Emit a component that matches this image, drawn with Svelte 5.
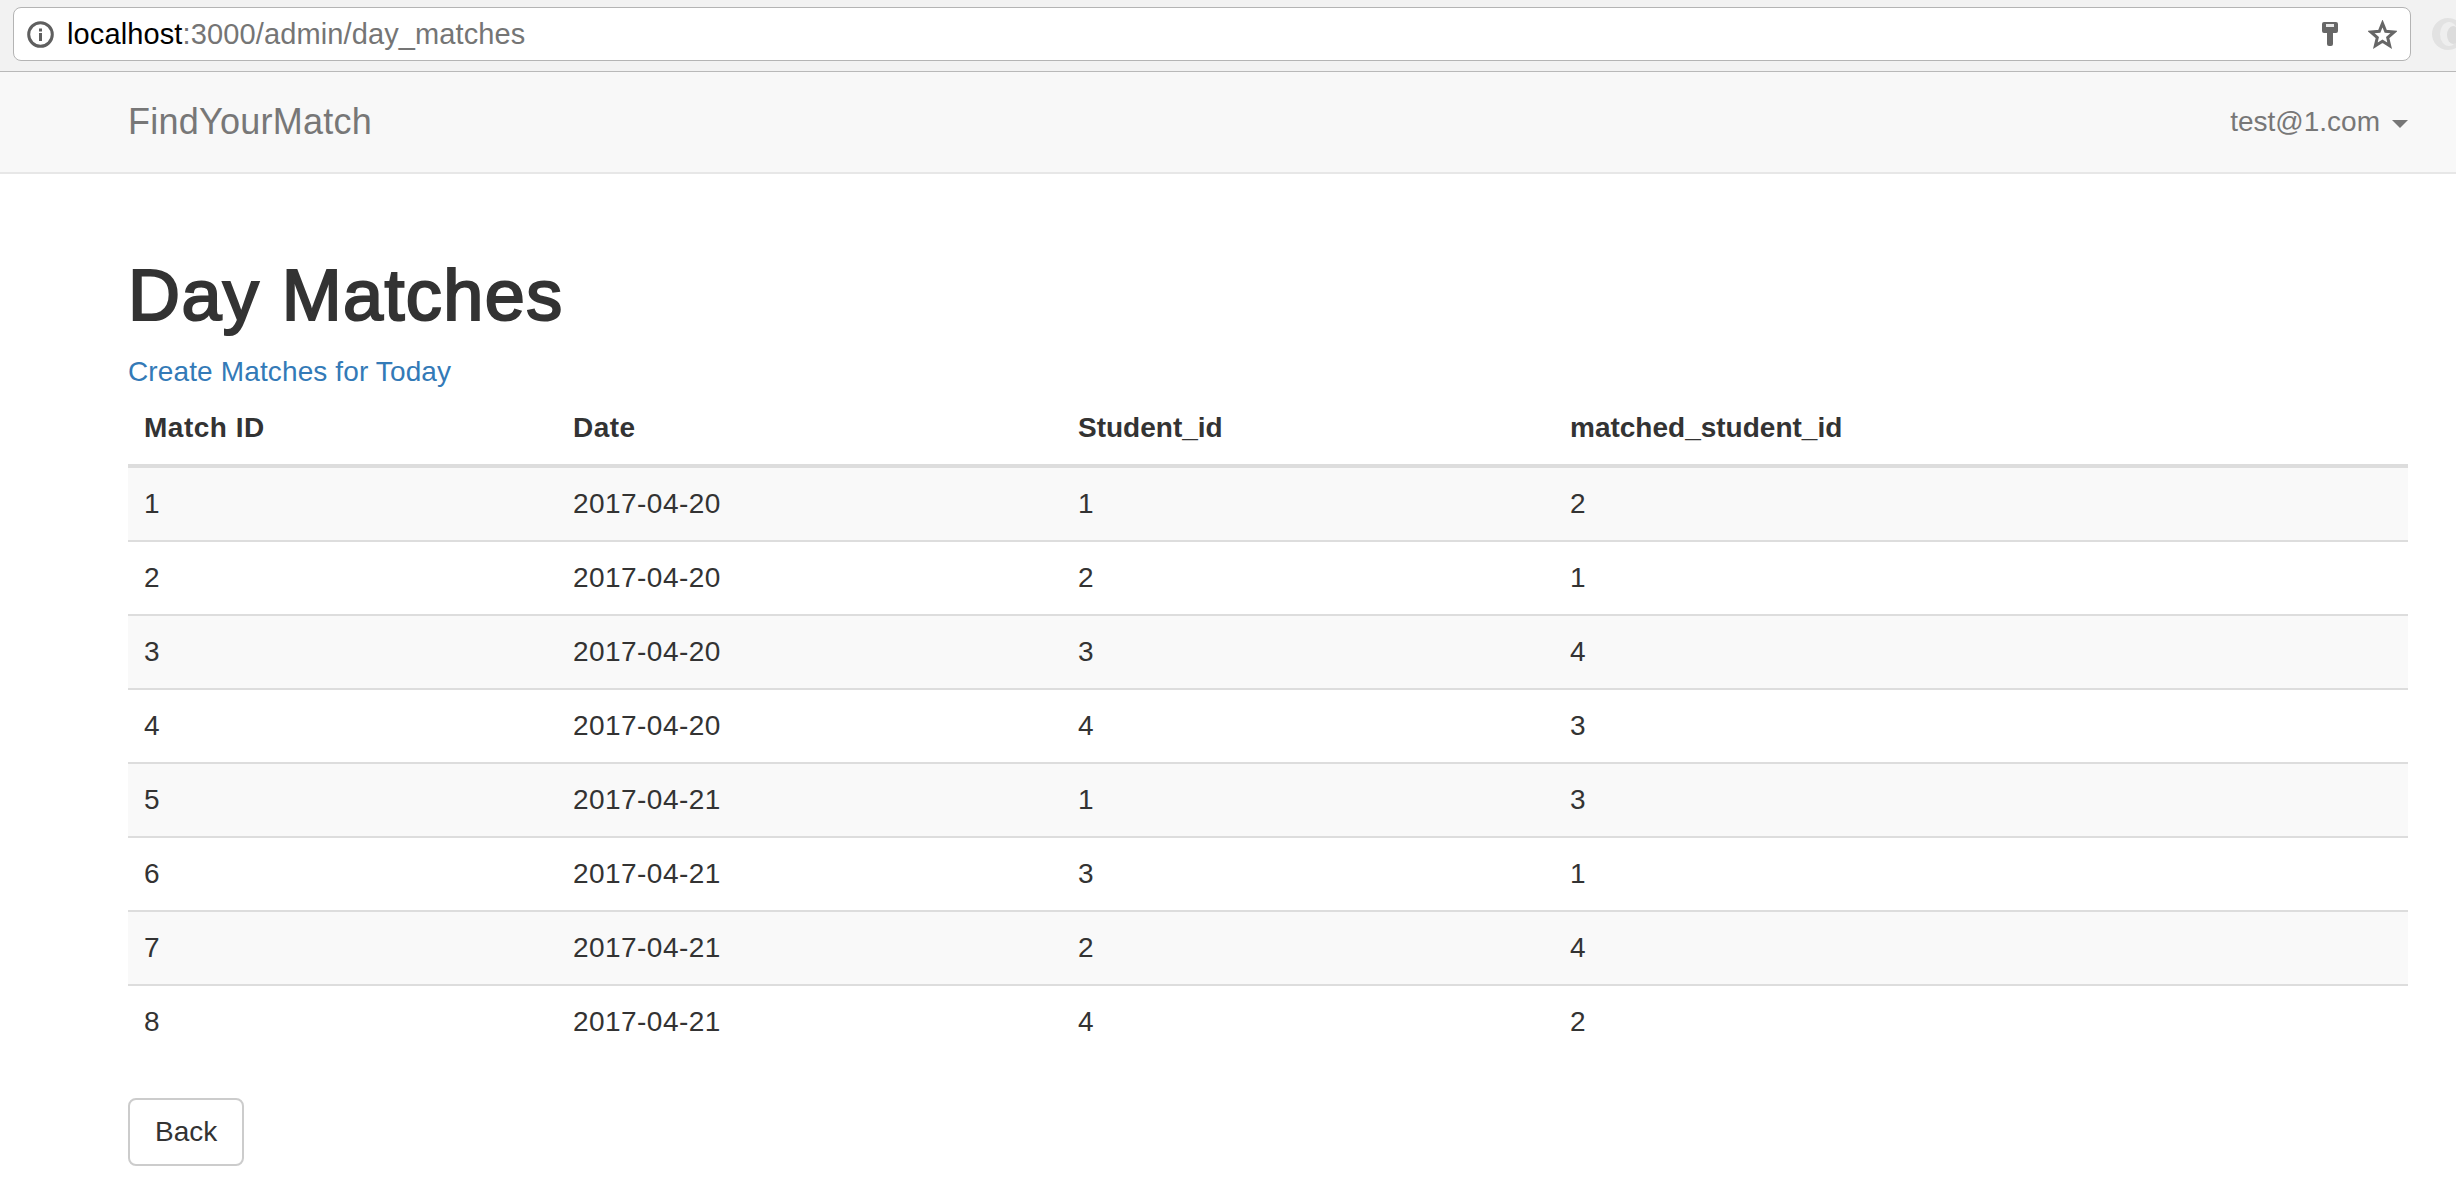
<script lang="ts">
	const matches = [
		{ id: 1, date: "2017-04-20", student: 1, matched: 2 },
		{ id: 2, date: "2017-04-20", student: 2, matched: 1 },
		{ id: 3, date: "2017-04-20", student: 3, matched: 4 },
		{ id: 4, date: "2017-04-20", student: 4, matched: 3 },
		{ id: 5, date: "2017-04-21", student: 1, matched: 3 },
		{ id: 6, date: "2017-04-21", student: 3, matched: 1 },
		{ id: 7, date: "2017-04-21", student: 2, matched: 4 },
		{ id: 8, date: "2017-04-21", student: 4, matched: 2 }
	];
</script>

<div class="chrome">
	<div class="omnibox">
		<svg class="info" viewBox="0 0 27 27" width="27" height="27" aria-hidden="true">
			<circle cx="13.5" cy="13.5" r="11.8" fill="none" stroke="#5f5f5f" stroke-width="3" />
			<rect x="12" y="12" width="3" height="8" fill="#5f5f5f" />
			<rect x="12" y="7.5" width="3" height="3" fill="#5f5f5f" />
		</svg>
		<span class="url"><span class="host">localhost</span>:3000/admin/day_matches</span>
		<svg class="key" viewBox="0 0 16 24" width="16" height="24" aria-hidden="true">
			<path d="M2 0h12a2 2 0 0 1 2 2v7a2 2 0 0 1-2 2h-3v11a2 2 0 0 1-2 2H7a2 2 0 0 1-2-2V11H2a2 2 0 0 1-2-2V2a2 2 0 0 1 2-2z" fill="#666" />
			<rect x="4" y="2" width="8" height="3" fill="#e8e8e8" />
		</svg>
		<svg class="star" viewBox="0 0 29 29" width="29" height="29" aria-hidden="true">
			<path d="M14.5 3.4l3.2 7.9 8.5.7-6.5 5.5 2 8.3-7.2-4.5-7.2 4.5 2-8.3L2.8 12l8.5-.7z" fill="none" stroke="#666" stroke-width="3" stroke-linejoin="miter" />
		</svg>
	</div>
	<svg class="ext" viewBox="0 0 24 32" width="24" height="32" aria-hidden="true">
		<circle cx="16" cy="16" r="16" fill="#e2e2e2" />
		<ellipse cx="17" cy="16" rx="9" ry="12" fill="#eeeeee" />
		<ellipse cx="21" cy="17" rx="6" ry="9" fill="#dcdcdc" />
	</svg>
</div>

<nav class="navbar">
	<a class="brand" href="#top">FindYourMatch</a>
	<a class="user" href="#top">test@1.com<span class="caret"></span></a>
</nav>

<main class="container">
	<h1>Day Matches</h1>
	<a class="create" href="#top">Create Matches for Today</a>

	<table>
		<colgroup>
			<col class="c1" />
			<col class="c2" />
			<col class="c3" />
			<col />
		</colgroup>
		<thead>
			<tr>
				<th>Match ID</th>
				<th>Date</th>
				<th>Student_id</th>
				<th>matched_student_id</th>
			</tr>
		</thead>
		<tbody>
			{#each matches as m}
				<tr>
					<td>{m.id}</td>
					<td class="date">{m.date}</td>
					<td>{m.student}</td>
					<td>{m.matched}</td>
				</tr>
			{/each}
		</tbody>
	</table>

	<a class="btn" href="#top">Back</a>
</main>

<style>
	:global(body) {
		background: #fff;
		color: #333;
		font-family: "Liberation Sans", Arial, sans-serif;
		font-size: 28px;
		line-height: 40px;
		overflow: hidden;
	}

	a {
		text-decoration: none;
	}

	.chrome {
		height: 72px;
		box-sizing: border-box;
		background: #f2f2f2;
		border-bottom: 1px solid #b9b9b9;
		padding: 7px 0 0 13px;
		display: flex;
		overflow: hidden;
	}

	.omnibox {
		flex: none;
		width: 2398px;
		height: 54px;
		box-sizing: border-box;
		background: #fff;
		border: 1px solid #b4b4b4;
		border-radius: 8px;
		display: flex;
		align-items: center;
		padding: 0 13px;
	}

	.info {
		margin-right: 13px;
	}

	.url {
		flex: 1;
		font-size: 29px;
		letter-spacing: 0.12px;
		color: #757575;
	}

	.host {
		color: #000;
	}

	.key {
		margin-right: 30px;
	}

	.ext {
		flex: none;
		margin: 11px 0 0 21px;
	}

	.navbar {
		height: 102px;
		box-sizing: border-box;
		background: #f8f8f8;
		border-bottom: 2px solid #e7e7e7;
		padding: 0 48px 0 128px;
		display: flex;
		align-items: center;
		justify-content: space-between;
	}

	.brand {
		font-size: 36px;
		letter-spacing: 0.25px;
		color: #777;
	}

	.user {
		color: #777;
	}

	.caret {
		display: inline-block;
		margin-left: 12px;
		vertical-align: middle;
		border-top: 8px solid #777;
		border-left: 8px solid transparent;
		border-right: 8px solid transparent;
	}

	.container {
		padding: 0 48px 0 128px;
	}

	h1 {
		margin: 82px 0 17px;
		font-size: 72px;
		line-height: 79px;
		font-weight: 400;
		letter-spacing: 1.4px;
		-webkit-text-stroke: 2.2px #333;
		color: #333;
	}

	.create {
		color: #337ab7;
		display: block;
		letter-spacing: 0.13px;
	}

	table {
		width: 100%;
		border-collapse: collapse;
		table-layout: fixed;
		margin-bottom: 40px;
	}

	.c1 {
		width: 429px;
	}

	.c2 {
		width: 505px;
	}

	.c3 {
		width: 492px;
	}

	th,
	td {
		padding: 16px;
		text-align: left;
	}

	th {
		font-weight: 700;
		border-bottom: 4px solid #ddd;
	}

	th:nth-child(-n + 2) {
		letter-spacing: 0.5px;
	}

	td {
		border-top: 2px solid #ddd;
	}

	td.date {
		letter-spacing: 0.45px;
	}

	tbody tr:nth-child(odd) {
		background: #f9f9f9;
	}

	tbody tr:first-child td {
		border-top: 0;
	}

	.btn {
		display: inline-block;
		color: #333;
		background: #fff;
		border: 2px solid #ccc;
		border-radius: 8px;
		padding: 12px 25px;
	}
</style>
